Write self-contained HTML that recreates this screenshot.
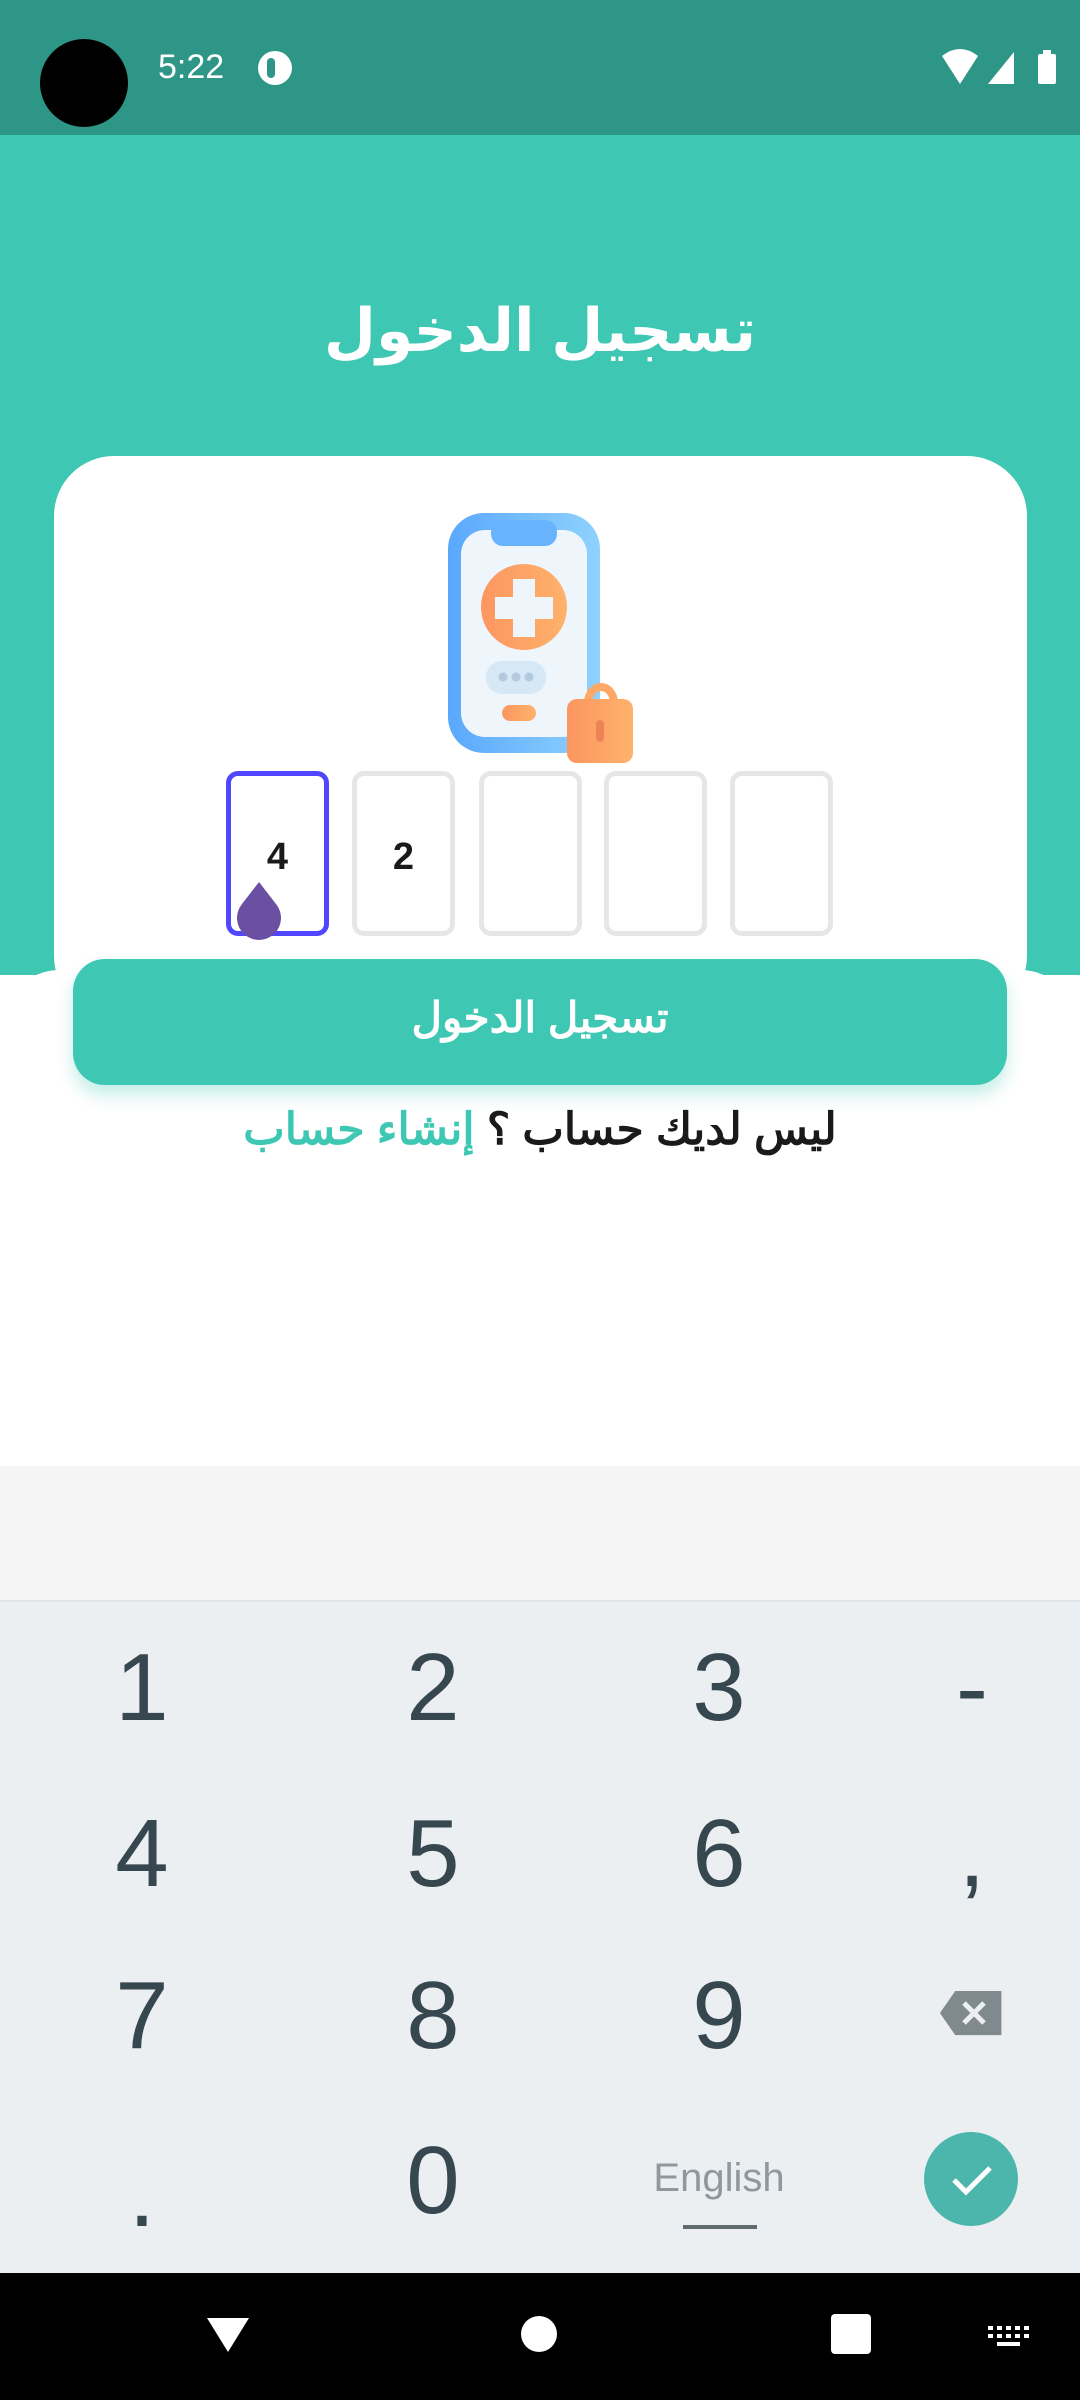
<!DOCTYPE html>
<html><head><meta charset="utf-8"><style>
*{margin:0;padding:0;box-sizing:border-box}
body{width:1080px;height:2400px;position:relative;overflow:hidden;background:#fff;font-family:"Liberation Sans","Noto Sans CJK SC",sans-serif}
.a{position:absolute}
.k{position:absolute;width:200px;text-align:center;font-size:96px;color:#37474f;line-height:1;font-family:"Liberation Sans",sans-serif}
.box{position:absolute;top:771px;width:103px;height:165px;border:5px solid #e6e6e6;border-radius:12px;background:#fff}
</style></head><body>
<div class="a" style="left:0;top:0;width:1080px;height:135px;background:#2d9687"></div>
<div class="a" style="left:40px;top:39px;width:88px;height:88px;border-radius:50%;background:#000"></div>
<div class="a" style="left:158px;top:48px;font-size:34px;color:#fff">5:22</div>
<div class="a" style="left:258px;top:51px;width:34px;height:34px;border-radius:50%;background:#fff"></div>
<div class="a" style="left:267px;top:58px;width:8px;height:20px;border-radius:4px;background:#2d9687"></div>
<svg class="a" style="left:940px;top:48px" width="120" height="40"><path d="M2 8 Q20 -6 38 8 L20 36Z" fill="#fff"/><path d="M48 36 L74 4 L74 36Z" fill="#fff"/><rect x="98" y="6" width="18" height="30" rx="2" fill="#fff"/><rect x="103" y="2" width="8" height="5" fill="#fff"/></svg>
<div class="a" style="left:0;top:135px;width:1080px;height:840px;background:#3ec7b3"></div>
<div class="a" style="left:0;top:296px;width:1080px;text-align:center;font-size:60px;font-weight:bold;color:#fff;font-family:'Liberation Sans','DejaVu Sans',sans-serif" dir="rtl">تسجيل الدخول</div>
<div class="a" style="left:0;top:970px;width:1080px;height:500px;background:#fff;border-radius:60px 60px 0 0"></div>
<div class="a" style="left:54px;top:456px;width:973px;height:560px;background:#fff;border-radius:60px"></div>
<svg class="a" style="left:440px;top:505px" width="200" height="265" viewBox="440 505 200 265">
<defs><linearGradient id="b" x1="0" x2="1"><stop offset="0" stop-color="#5aa8fd"/><stop offset="1" stop-color="#8fd2fe"/></linearGradient><linearGradient id="o" x1="0" x2="1"><stop offset="0" stop-color="#fd9660"/><stop offset="1" stop-color="#feb26b"/></linearGradient></defs>
<rect x="448" y="513" width="152" height="240" rx="36" fill="url(#b)"/>
<rect x="461" y="530" width="126" height="207" rx="24" fill="#eef6fc"/>
<rect x="491" y="520" width="66" height="26" rx="12" fill="#68b3fd"/>
<circle cx="524" cy="607" r="43" fill="url(#o)"/>
<path d="M513 579h22v18h18v22h-18v18h-22v-18h-18v-22h18z" fill="#eef6fc"/>
<rect x="486" y="661" width="60" height="33" rx="16" fill="#d6e7f6"/>
<circle cx="503" cy="677" r="4.5" fill="#b2c9de"/><circle cx="516" cy="677" r="4.5" fill="#b2c9de"/><circle cx="529" cy="677" r="4.5" fill="#b2c9de"/>
<rect x="502" y="705" width="34" height="16" rx="8" fill="url(#o)"/>
<path d="M588 725v-22a13 16 0 0 1 26 0v22" fill="none" stroke="#fea868" stroke-width="8"/>
<rect x="567" y="699" width="66" height="64" rx="10" fill="url(#o)"/>
<rect x="596" y="720" width="8" height="22" rx="4" fill="#ec8458"/>
</svg>
<div class="box" style="left:226px;border-color:#4f46fd"></div>
<div class="box" style="left:352px"></div>
<div class="box" style="left:479px"></div>
<div class="box" style="left:604px"></div>
<div class="box" style="left:730px"></div>
<div class="a" style="left:226px;top:836px;width:103px;text-align:center;font-size:38px;font-weight:bold;color:#1a1a1a">4</div>
<div class="a" style="left:352px;top:836px;width:103px;text-align:center;font-size:38px;font-weight:bold;color:#1a1a1a">2</div>
<svg class="a" style="left:224px;top:880px" width="70" height="74"><path d="M35 2 L52 24 A22 22 0 1 1 18 24Z" fill="#6a4fa3"/></svg>
<div class="a" style="left:73px;top:959px;width:934px;height:126px;border-radius:32px;background:#3ec7b3;box-shadow:0 10px 16px rgba(62,199,179,.3)"></div>
<div class="a" style="left:73px;top:993px;width:934px;text-align:center;font-size:42px;font-weight:bold;color:#fff" dir="rtl">تسجيل الدخول</div>
<div class="a" style="left:0;top:1104px;width:1080px;text-align:center;font-size:44px;font-weight:bold;color:#1a1a1a" dir="rtl">ليس لديك حساب ؟ <span style="color:#3ec7b3">إنشاء حساب</span></div>
<div class="a" style="left:0;top:1466px;width:1080px;height:136px;background:#f5f5f5"></div>
<div class="a" style="left:0;top:1600px;width:1080px;height:673px;background:#eceff1;border-top:2px solid #e3e6e8"></div>
<div class="k" style="left:42px;top:1640px">1</div><div class="k" style="left:333px;top:1640px">2</div><div class="k" style="left:619px;top:1640px">3</div><div class="k" style="left:872px;top:1640px">-</div>
<div class="k" style="left:42px;top:1806px">4</div><div class="k" style="left:333px;top:1806px">5</div><div class="k" style="left:619px;top:1806px">6</div><div class="k" style="left:872px;top:1806px">,</div>
<div class="k" style="left:42px;top:1968px">7</div><div class="k" style="left:333px;top:1968px">8</div><div class="k" style="left:619px;top:1968px">9</div>
<div class="k" style="left:42px;top:2146px">.</div><div class="k" style="left:333px;top:2133px">0</div>
<svg class="a" style="left:938px;top:1990px" width="66" height="50"><path d="M2 24 L18 1 H66 V47 H18Z" fill="#80898e" transform="scale(.96)"/><path d="M26 13 L46 33 M46 13 L26 33" stroke="#eceff1" stroke-width="5"/></svg>
<div class="a" style="left:619px;top:2156px;width:200px;text-align:center;font-size:40px;color:#8e989e">English</div>
<div class="a" style="left:683px;top:2225px;width:74px;height:4px;background:#5f6b71"></div>
<div class="a" style="left:924px;top:2132px;width:94px;height:94px;border-radius:50%;background:#4db6ac"></div>
<svg class="a" style="left:924px;top:2132px" width="94" height="94"><path d="M30 48 L42 60 L66 36" fill="none" stroke="#fff" stroke-width="5"/></svg>
<div class="a" style="left:0;top:2273px;width:1080px;height:127px;background:#000"></div>
<svg class="a" style="left:0;top:2300px" width="1080" height="70"><path d="M207 18 H249 L228 52Z" fill="#fff"/><circle cx="539" cy="34" r="18" fill="#fff"/><rect x="831" y="14" width="40" height="40" rx="4" fill="#fff"/>
<g fill="#fff"><rect x="988" y="26" width="5" height="4"/><rect x="997" y="26" width="5" height="4"/><rect x="1006" y="26" width="5" height="4"/><rect x="1015" y="26" width="5" height="4"/><rect x="1024" y="26" width="5" height="4"/><rect x="988" y="34" width="5" height="4"/><rect x="997" y="34" width="5" height="4"/><rect x="1006" y="34" width="5" height="4"/><rect x="1015" y="34" width="5" height="4"/><rect x="1024" y="34" width="5" height="4"/><rect x="997" y="42" width="23" height="4"/></g></svg>
</body></html>
